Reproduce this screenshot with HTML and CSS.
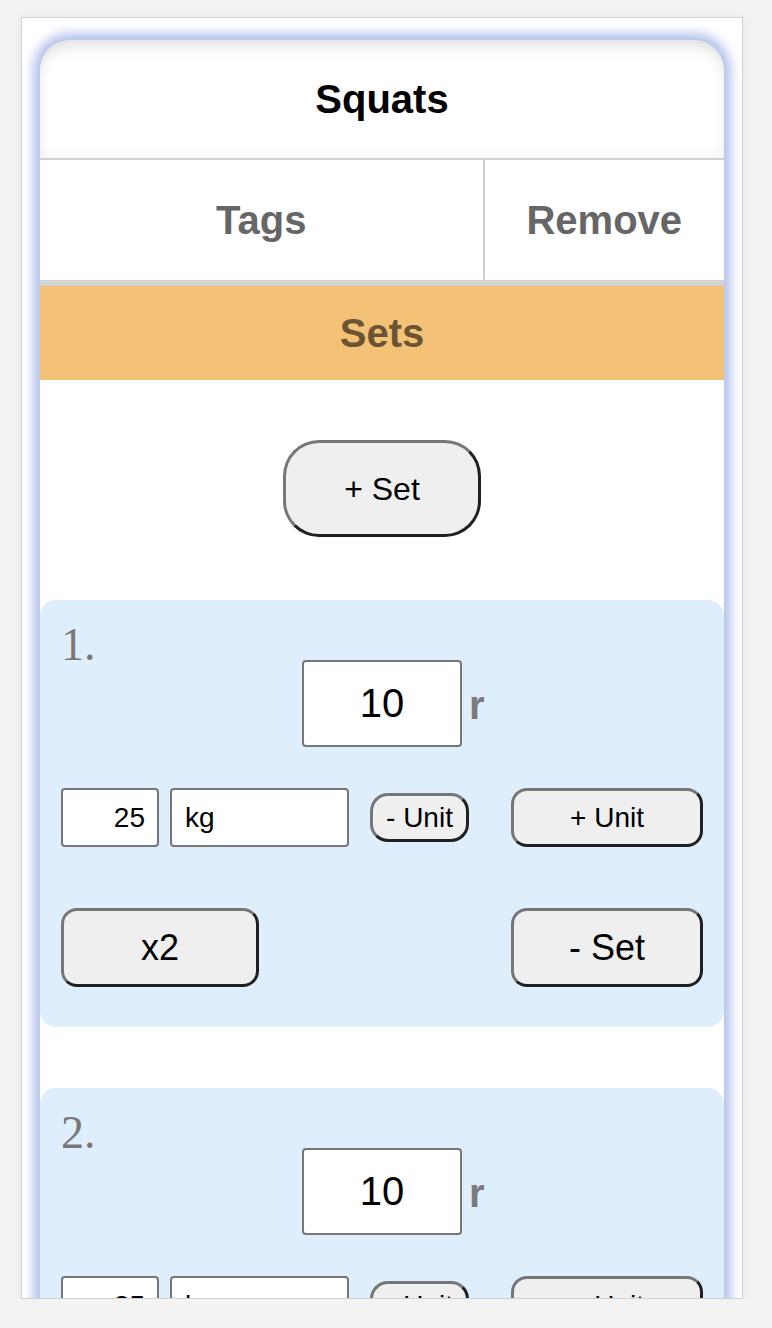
FILE: index.html
```html
<!DOCTYPE html>
<html lang="en">
<head>
<meta charset="utf-8">
<title>Squats</title>
<link rel="stylesheet" href="styles.css">
</head>
<body>
<div class="frame">
  <div class="card">
    <div class="header">Squats</div>
    <div class="actions">
      <div class="action tags">Tags</div>
      <div class="action">Remove</div>
    </div>
    <div class="section">Sets</div>
    <div class="add-wrap"><button class="btn btn-add">+ Set</button></div>
    <div class="sets">
      <div class="set">
        <div class="reps-row">
          <div class="num">1.</div>
          <input class="field reps" type="text" value="10">
          <div class="r">r</div>
        </div>
        <div class="weight-row">
          <input class="field w-val" type="text" value="25">
          <input class="field w-unit" type="text" value="kg">
          <button class="btn btn-sm">- Unit</button>
          <button class="btn btn-unit">+ Unit</button>
        </div>
        <div class="act-row">
          <button class="btn btn-big">x2</button>
          <button class="btn btn-big btn-rm">- Set</button>
        </div>
      </div>
      <div class="set">
        <div class="reps-row">
          <div class="num">2.</div>
          <input class="field reps" type="text" value="10">
          <div class="r">r</div>
        </div>
        <div class="weight-row">
          <input class="field w-val" type="text" value="25">
          <input class="field w-unit" type="text" value="kg">
          <button class="btn btn-sm">- Unit</button>
          <button class="btn btn-unit">+ Unit</button>
        </div>
        <div class="act-row">
          <button class="btn btn-big">x2</button>
          <button class="btn btn-big btn-rm">- Set</button>
        </div>
      </div>
    </div>
  </div>
</div>
</body>
</html>
```
FILE: styles.css
```css
* { box-sizing: border-box; }
html, body { margin: 0; padding: 0; }
body {
  background: #f3f3f3;
  font-family: "Liberation Sans", Arial, sans-serif;
}
.frame {
  margin: 17px 0 0 21px;
  width: 722px;
  height: 1282px;
  border: 1px solid #d2d2d2;
  background: #fff;
  overflow: hidden;
  padding: 22px 18px 0;
  box-shadow: 0 2px 14px rgba(0, 0, 0, 0.06);
}
.card {
  background: #fff;
  border-radius: 30px 30px 0 0;
  box-shadow: 0 0 11px 7px #b5c3eb;
}
.header {
  height: 120px;
  display: flex;
  align-items: center;
  justify-content: center;
  font-size: 40px;
  font-weight: bold;
  color: #000;
  border-bottom: 2px solid #d0d0d0;
  border-radius: 30px 30px 0 0;
  box-shadow: inset 0 14px 18px -10px rgba(0, 0, 0, 0.12), inset 0 0 16px rgba(0, 0, 0, 0.05);
}
.actions {
  display: grid;
  grid-template-columns: 65% 35%;
  height: 126px;
  border-bottom: 6px solid #d3d3d3;
}
.action {
  display: flex;
  align-items: center;
  justify-content: center;
  font-size: 40px;
  font-weight: bold;
  color: #666;
}
.tags { border-right: 2px solid #d0d0d0; }
.section {
  height: 94px;
  background: #f4c276;
  color: #6b5433;
  font-size: 40px;
  font-weight: bold;
  display: flex;
  align-items: center;
  justify-content: center;
}
.add-wrap {
  padding: 60px 0 63px;
  display: flex;
  justify-content: center;
}
.btn {
  font-family: inherit;
  color: #000;
  background: #efefef;
  border: 3px solid;
  border-color: #767676 #202020 #202020 #767676;
  padding: 0;
  line-height: 1;
}
.btn-add {
  width: 198px;
  height: 97px;
  border-radius: 36px;
  font-size: 32px;
}
.sets {
  display: flex;
  flex-direction: column;
  gap: 61px;
}
.set {
  background: #dfeefc;
  border-radius: 16px;
  padding: 20px 21px 40px;
}
.reps-row {
  display: grid;
  grid-template-columns: 1fr 160px 1fr;
  align-items: start;
}
.num {
  font-family: "Liberation Serif", "Times New Roman", serif;
  font-size: 46px;
  line-height: 1;
  color: #777;
  margin: 2px 0 0 0;
}
.field {
  font-family: inherit;
  color: #000;
  background: #fff;
  border: 2px solid #767676;
  border-radius: 4px;
  outline: none;
  margin: 0;
}
.reps {
  margin-top: 40px;
  width: 160px;
  height: 87px;
  font-size: 40px;
  text-align: center;
  padding: 0;
}
.r {
  align-self: center;
  margin-top: 42px;
  padding-left: 7px;
  font-size: 40px;
  font-weight: bold;
  color: #7a7a7a;
  line-height: 1;
}
.weight-row {
  display: flex;
  align-items: center;
  margin-top: 41px;
}
.w-val {
  width: 98px;
  height: 59px;
  font-size: 28px;
  text-align: right;
  padding: 0 12px;
}
.w-unit {
  width: 179px;
  height: 59px;
  margin-left: 11px;
  font-size: 28px;
  padding: 0 13px;
}
.btn-sm {
  width: 99px;
  height: 49px;
  margin-left: 21px;
  border-radius: 18px;
  font-size: 28px;
}
.btn-unit {
  width: 192px;
  height: 59px;
  margin-left: auto;
  border-radius: 16px;
  font-size: 28px;
}
.act-row {
  display: flex;
  justify-content: space-between;
  margin-top: 61px;
}
.btn-big {
  width: 198px;
  height: 79px;
  border-radius: 16px;
  font-size: 36px;
}
.btn-rm { width: 192px; }
```
